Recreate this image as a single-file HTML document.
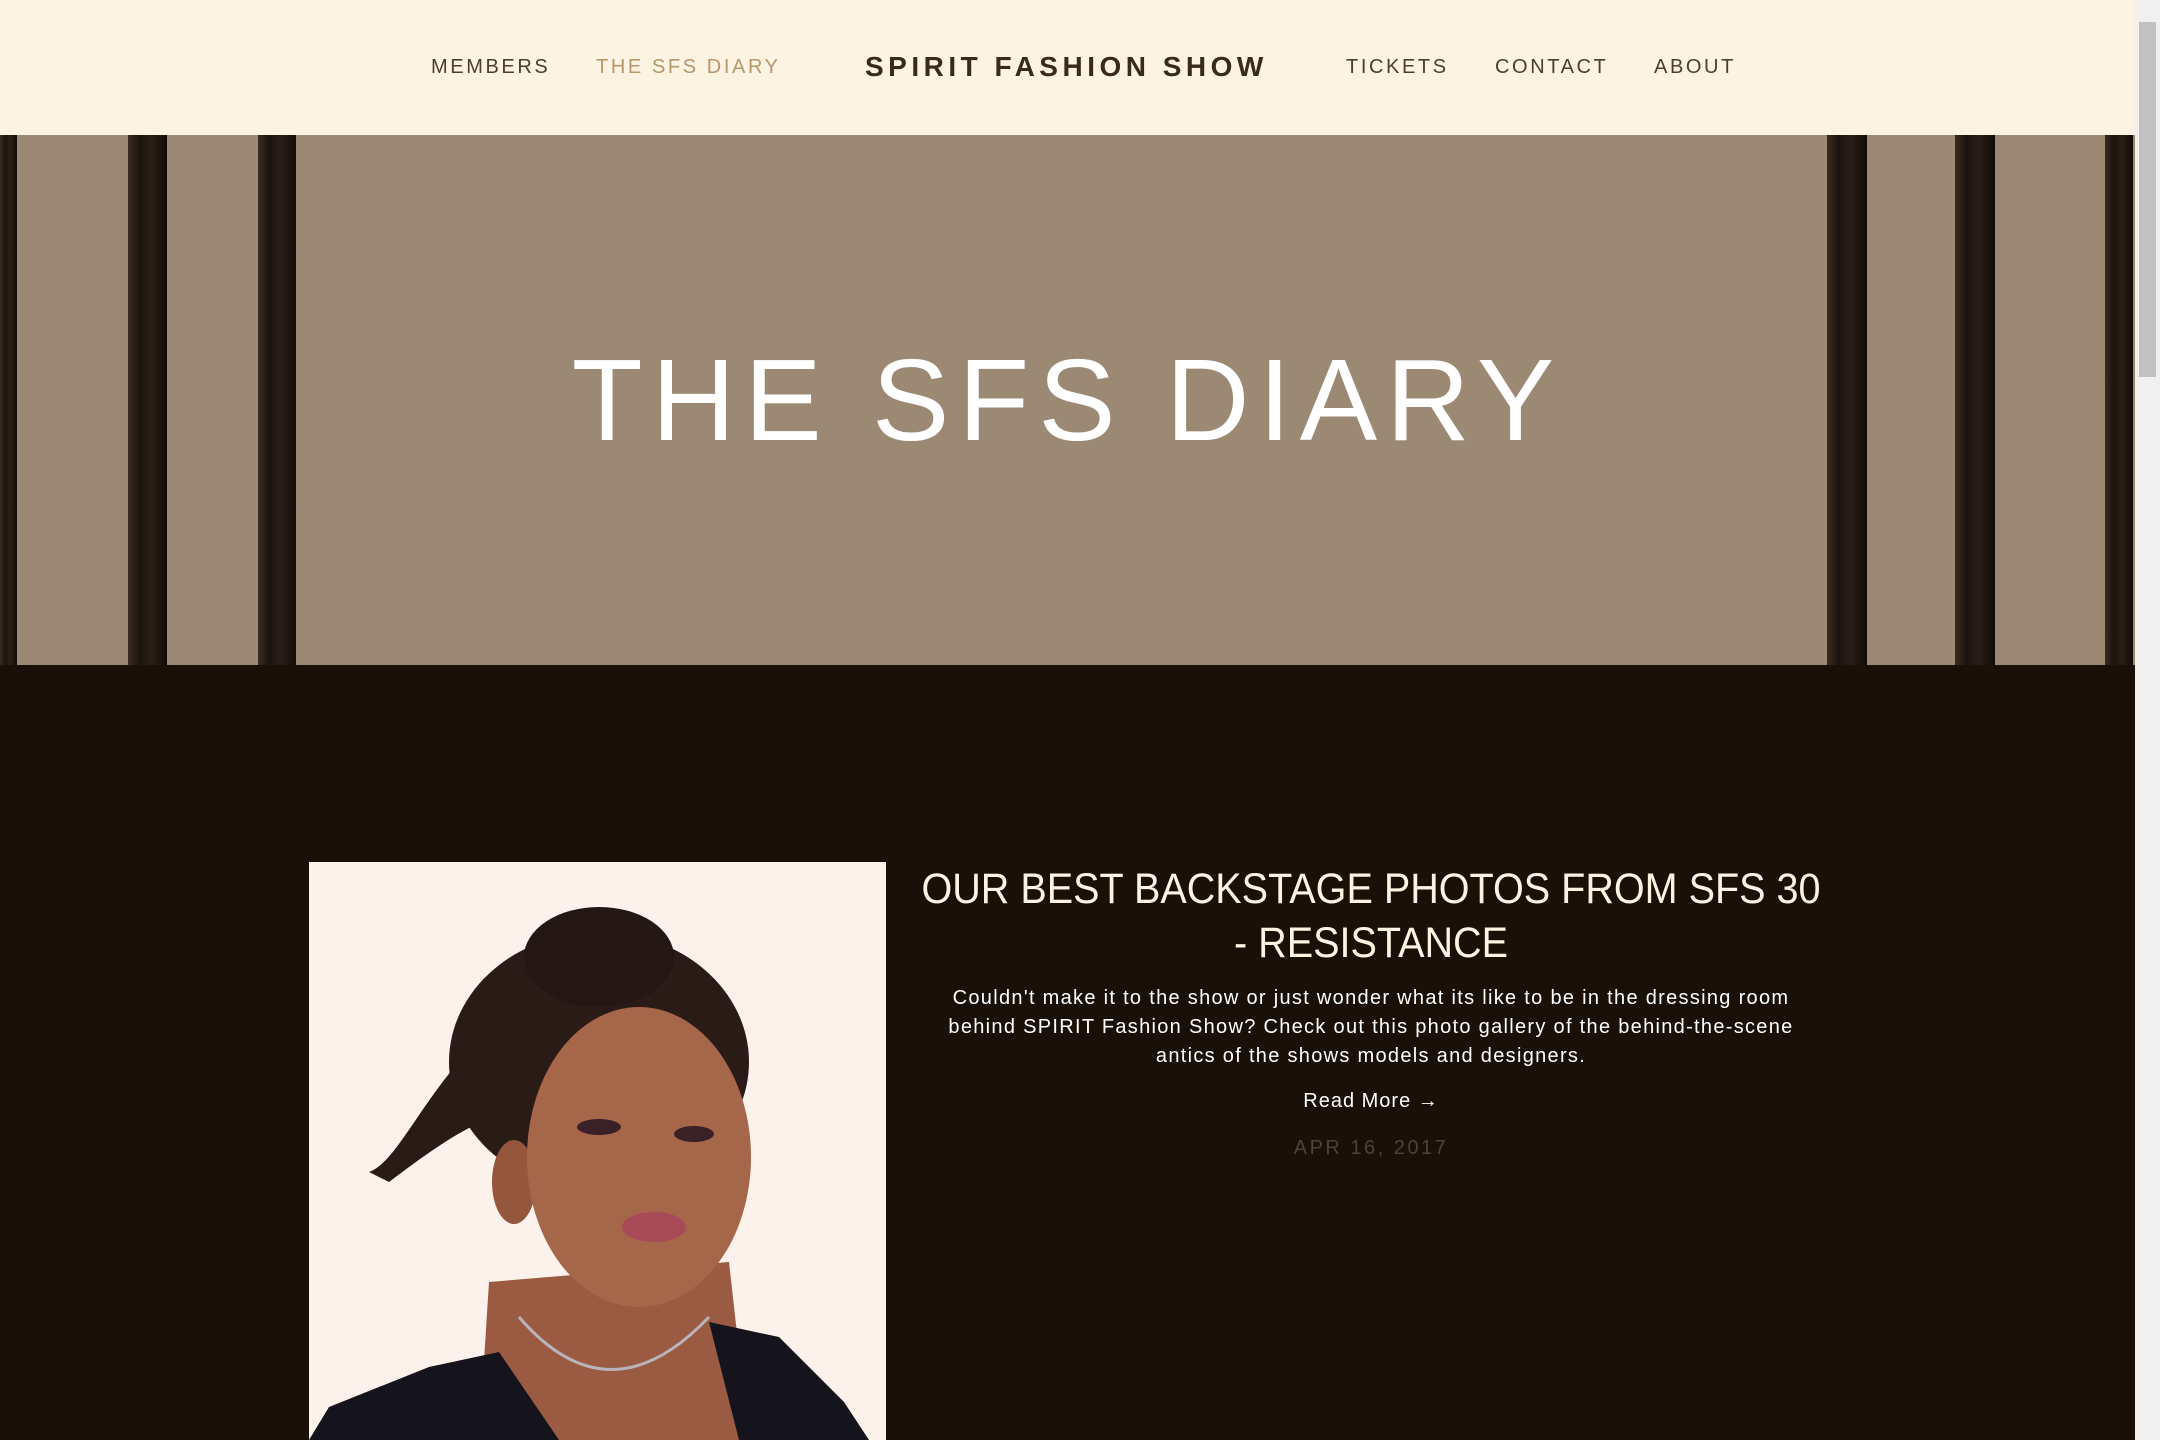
<!DOCTYPE html>
<html><head><meta charset="utf-8"><style>
*{margin:0;padding:0;box-sizing:border-box}
html,body{width:2160px;height:1440px;overflow:hidden;background:#1a1007;font-family:"Liberation Sans",sans-serif}
.hdr{position:absolute;left:0;top:0;width:2135px;height:135px;background:#fcf3e3}
.nav{position:absolute;top:56px;font-size:20px;letter-spacing:2.6px;color:#4e3d2b;white-space:nowrap}
.logo{position:absolute;top:51px;left:865px;font-size:28px;letter-spacing:4.5px;color:#3a2a1a;font-weight:bold;white-space:nowrap}
.hero{position:absolute;left:0;top:135px;width:2135px;height:530px;background:#9b8974;overflow:hidden}
.st{position:absolute;top:0;height:530px;background:linear-gradient(90deg,#3a2c22,#1c130e 30%,#2b1f18 60%,#120b07)}
.ht{position:absolute;left:0;width:2135px;text-align:center;color:#fff;font-size:116px;letter-spacing:9px;line-height:1}
.sb{position:absolute;right:0;top:0;width:25px;height:1440px;background:#f0f0f0}
.sb div{position:absolute;left:4px;top:22px;width:17px;height:355px;background:#c1c1c1}
.h2{position:absolute;left:871px;width:1000px;top:862px;text-align:center;color:#fcf3e3;font-size:43px;line-height:54px;transform:scaleX(0.92);white-space:nowrap}
.p{position:absolute;left:850px;width:1042px;top:984px;text-align:center;color:#fff;font-size:20px;line-height:29px;letter-spacing:1.3px;white-space:nowrap}
.rm{position:absolute;left:0;width:2742px;top:1090px;text-align:center;color:#fff;font-size:20px;letter-spacing:1px}
.dt{position:absolute;left:0;width:2742px;top:1137px;text-align:center;color:#4d4236;font-size:20px;letter-spacing:2.5px}
.img{position:absolute;left:309px;top:862px;width:577px;height:578px}
</style></head><body>
<div class="hdr">
<div class="nav" style="left:431px">MEMBERS</div>
<div class="nav" style="left:596px;color:#b8976a">THE SFS DIARY</div>
<div class="logo">SPIRIT FASHION SHOW</div>
<div class="nav" style="left:1346px">TICKETS</div>
<div class="nav" style="left:1495px">CONTACT</div>
<div class="nav" style="left:1654px">ABOUT</div>
</div>
<div class="hero">
<div class="st" style="left:0;width:17px"></div>
<div class="st" style="left:128px;width:39px"></div>
<div class="st" style="left:258px;width:38px"></div>
<div class="st" style="left:1827px;width:40px"></div>
<div class="st" style="left:1955px;width:40px"></div>
<div class="st" style="left:2105px;width:28px"></div>
<div class="ht" style="top:207px">THE SFS DIARY</div>
</div>
<svg class="img" viewBox="0 0 577 578">
<rect width="577" height="578" fill="#fdf1ec"/>
<path d="M180 420 L420 400 L440 578 L170 578Z" fill="#9a5b42"/>
<ellipse cx="290" cy="200" rx="150" ry="130" fill="#2a1b16"/>
<ellipse cx="290" cy="95" rx="75" ry="50" fill="#241612"/>
<path d="M180 170 C120 220 90 300 60 310 L80 320 C120 290 160 260 200 250Z" fill="#2a1b16"/>
<ellipse cx="205" cy="320" rx="22" ry="42" fill="#94563d"/>
<ellipse cx="330" cy="295" rx="112" ry="150" fill="#a6664a"/>
<ellipse cx="290" cy="265" rx="22" ry="8" fill="#3a2027"/>
<ellipse cx="385" cy="272" rx="20" ry="8" fill="#3a2027"/>
<ellipse cx="345" cy="365" rx="32" ry="15" fill="#a94a58"/>
<path d="M0 578 L20 545 L120 505 L190 490 L250 578Z" fill="#15141c"/>
<path d="M400 460 L470 475 L535 540 L560 578 L430 578Z" fill="#15141c"/>
<path d="M210 455 Q300 560 400 455" stroke="#b9b3ba" stroke-width="3" fill="none"/>
</svg>
<div class="h2">OUR BEST BACKSTAGE PHOTOS FROM SFS 30<br>- RESISTANCE</div>
<div class="p">Couldn't make it to the show or just wonder what its like to be in the dressing room<br>behind SPIRIT Fashion Show? Check out this photo gallery of the behind-the-scene<br>antics of the shows models and designers.</div>
<div class="rm">Read More →</div>
<div class="dt">APR 16, 2017</div>
<div class="sb"><div></div></div>
</body></html>
